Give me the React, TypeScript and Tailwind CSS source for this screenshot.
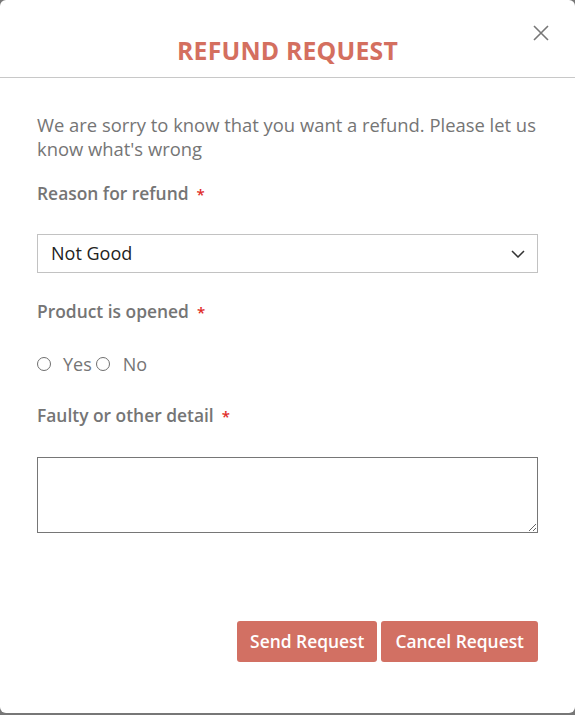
import { useState } from "react";

function Label({ text }: { text: string }) {
  return (
    <div className="text-[17.4px] leading-[24px] font-semibold text-[#757575]">
      {text}
      <span className="ml-[8px] text-[#e02b27] text-[15px]">*</span>
    </div>
  );
}

function Radio({ checked, onChange }: { checked: boolean; onChange: () => void }) {
  return (
    <input
      type="radio"
      name="opened"
      checked={checked}
      onChange={onChange}
      className="m-0 h-[14px] w-[14px] appearance-none rounded-full border border-[#6f6f6f] bg-white checked:border-[4px] checked:border-[#d27063]"
    />
  );
}

export default function App() {
  const [opened, setOpened] = useState<string | null>(null);

  return (
    <div className="h-[715px] w-[575px] bg-[#777] font-['Open_Sans',sans-serif]">
      <div className="relative h-[713px] w-full overflow-hidden rounded-[6px] bg-white">
        {/* header */}
        <div className="h-[78px] border-b border-[#c8c8c8] pt-[34px] text-center">
          <h1 className="text-[24.8px] leading-[32px] font-bold tracking-[0.2px] text-[#d46f5f]">
            REFUND REQUEST
          </h1>
        </div>
        <button className="absolute right-[26px] top-[25px] h-4 w-4" aria-label="Close">
          <svg viewBox="0 0 16 16" className="h-4 w-4" fill="none" stroke="#777" strokeWidth="1.6">
            <path d="M1 1 L15 15 M15 1 L1 15" />
          </svg>
        </button>

        {/* body */}
        <div className="flex flex-col px-[37px]">
          <p className="mt-[35px] text-[18.4px] leading-[24px] text-[#757575]">
            We are sorry to know that you want a refund. Please let us know what's wrong
          </p>

          <div className="mt-[20px]">
            <Label text="Reason for refund" />
          </div>
          <div className="relative mt-[28px]">
            <select
              defaultValue="Not Good"
              className="h-[39px] w-full appearance-none border border-[#c2c2c2] bg-white pl-[13px] text-[18px] text-[#222] outline-none"
            >
              <option>Not Good</option>
              <option>Damaged</option>
              <option>Other</option>
            </select>
            <svg
              viewBox="0 0 14 8"
              className="pointer-events-none absolute right-[13px] top-[16px] h-[8px] w-[14px]"
              fill="none"
              stroke="#333"
              strokeWidth="1.5"
            >
              <path d="M1 1 L7 7 L13 1" />
            </svg>
          </div>

          <div className="mt-[26px]">
            <Label text="Product is opened" />
          </div>
          <div className="mt-[28px] flex h-[24px] items-center text-[18px] text-[#757575]">
            <label className="flex items-center">
              <Radio checked={opened === "yes"} onChange={() => setOpened("yes")} />
              <span className="ml-[12px]">Yes</span>
            </label>
            <label className="ml-[4px] flex items-center">
              <Radio checked={opened === "no"} onChange={() => setOpened("no")} />
              <span className="ml-[13px]">No</span>
            </label>
          </div>

          <div className="mt-[27px]">
            <Label text="Faulty or other detail" />
          </div>
          <textarea className="mt-[29px] block h-[76px] w-full border border-[#767676] outline-none" />

          <div className="mt-[88px] flex justify-end gap-[4px]">
            <button className="h-[41px] rounded-[3px] bg-[#d27063] px-[13px] text-[17.4px] font-semibold text-white">
              Send Request
            </button>
            <button className="h-[41px] rounded-[3px] bg-[#d27063] px-[14px] text-[17.4px] font-semibold text-white">
              Cancel Request
            </button>
          </div>
        </div>
      </div>
    </div>
  );
}
